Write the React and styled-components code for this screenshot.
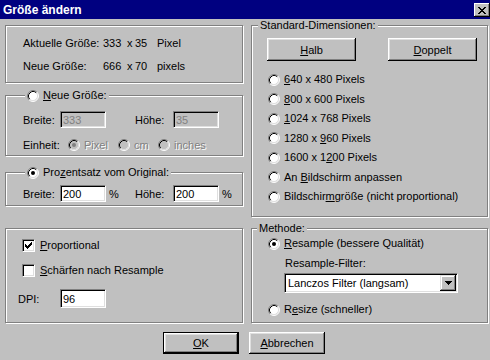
import styled, { createGlobalStyle } from "styled-components";

const GlobalStyle = createGlobalStyle`
  html, body {
    margin: 0;
    padding: 0;
    background: #c0c0c0;
  }
  body {
    font-family: "Liberation Sans", Arial, sans-serif;
    font-size: 11px;
    color: #000;
  }
`;

const RadioIcon = ({ checked, disabled }) => (
  <RadioSvg width="12" height="12" viewBox="0 0 12 12">
    <circle cx="6" cy="6" r="5" fill={disabled ? "#c0c0c0" : "#fff"} />
    <path d="M2.11 9.89A5.5 5.5 0 0 1 9.89 2.11" stroke="#808080" fill="none" />
    <path d="M9.89 2.11A5.5 5.5 0 0 1 2.11 9.89" stroke="#fff" fill="none" />
    <path d="M2.82 9.18A4.5 4.5 0 0 1 9.18 2.82" stroke="#000" fill="none" />
    <path d="M9.18 2.82A4.5 4.5 0 0 1 2.82 9.18" stroke="#dfdfdf" fill="none" />
    {checked && <circle cx="6" cy="6" r="2" fill={disabled ? "#808080" : "#000"} />}
  </RadioSvg>
);

const Radio = ({ checked, disabled, h, children }) => (
  <Option $h={h} $disabled={disabled}>
    <RadioIcon checked={checked} disabled={disabled} />
    <span>{children}</span>
  </Option>
);

const Check = ({ checked, children }) => (
  <CheckRow>
    <CheckBox>
      {checked && (
        <svg width="7" height="7" viewBox="0 0 7 7">
          <path
            d="M0 2h1v3H0z M1 3h1v3H1z M2 4h1v3H2z M3 3h1v3H3z M4 2h1v3H4z M5 1h1v3H5z M6 0h1v3H6z"
            fill="#000"
          />
        </svg>
      )}
    </CheckBox>
    <span>{children}</span>
  </CheckRow>
);

const App = () => (
  <Window>
    <GlobalStyle />
    <TitleBar>
      <span>Größe ändern</span>
      <CloseBox>
        <svg width="8" height="7" viewBox="0 0 8 7">
          <path
            d="M0 0h2v1H0z M6 0h2v1H6z M1 1h2v1H1z M5 1h2v1H5z M2 2h4v1H2z M3 3h2v1H3z M2 4h4v1H2z M1 5h2v1H1z M5 5h2v1H5z M0 6h2v1H0z M6 6h2v1H6z"
            fill="#000"
          />
        </svg>
      </CloseBox>
    </TitleBar>

    <Body>
      <Column $w={238}>
        <Group $h={58} $pad="11px 0 0 17px">
          <InfoGrid>
            <span>Aktuelle Größe:</span>
            <span>333</span>
            <span>x</span>
            <span>35</span>
            <span>Pixel</span>
            <span>Neue Größe:</span>
            <span>666</span>
            <span>x</span>
            <span>70</span>
            <span>pixels</span>
          </InfoGrid>
        </Group>

        <Group $h={61} $mt={12} $pad="15px 0 0 17px">
          <Legend $left={19}>
            <Radio>
              <u>N</u>eue Größe:
            </Radio>
          </Legend>
          <SizeRow>
            <span>Breite:</span>
            <Field disabled defaultValue="333" />
            <span />
            <span>Höhe:</span>
            <Field disabled defaultValue="35" />
          </SizeRow>
          <UnitRow>
            <span>Einheit:</span>
            <Radio checked disabled>Pixel</Radio>
            <Radio disabled>cm</Radio>
            <Radio disabled>inches</Radio>
          </UnitRow>
        </Group>

        <Group $h={34} $mt={16} $pad="12px 0 0 17px">
          <Legend $left={19}>
            <Radio checked>
              Pro<u>z</u>entsatz vom Original:
            </Radio>
          </Legend>
          <SizeRow>
            <span>Breite:</span>
            <Field defaultValue="200" />
            <Pct>%</Pct>
            <span>Höhe:</span>
            <Field defaultValue="200" />
            <Pct>%</Pct>
          </SizeRow>
        </Group>

        <Group $h={95} $mt={22} $pad="10px 0 0 12px">
          <Check checked>
            <u>P</u>roportional
          </Check>
          <Check>
            <u>S</u>chärfen nach Resample
          </Check>
          <DpiRow>
            <span>DPI:</span>
            <Field $h={19} defaultValue="96" />
          </DpiRow>
        </Group>
      </Column>

      <Column $w={237}>
        <Group $h={192} $pad="12px 0 0 0">
          <Legend $left={6}>Standard-Dimensionen:</Legend>
          <ButtonRow>
            <Button $w={89} $h={23}>
              <u>H</u>alb
            </Button>
            <Button $w={89} $h={23}>
              <u>D</u>oppelt
            </Button>
          </ButtonRow>
          <RadioList>
            <Radio h={19.5}>
              <u>6</u>40 x 480 Pixels
            </Radio>
            <Radio h={19.5}>
              <u>8</u>00 x 600 Pixels
            </Radio>
            <Radio h={19.5}>
              <u>1</u>024 x 768 Pixels
            </Radio>
            <Radio h={19.5}>
              1280 x <u>9</u>60 Pixels
            </Radio>
            <Radio h={19.5}>
              1600 x 1<u>2</u>00 Pixels
            </Radio>
            <Radio h={19.5}>
              An <u>B</u>ildschirm anpassen
            </Radio>
            <Radio h={19.5}>
              Bildschir<u>m</u>größe (nicht proportional)
            </Radio>
          </RadioList>
        </Group>

        <Group $h={95} $mt={11} $pad="8px 0 0 16px">
          <Legend $left={5}>Methode:</Legend>
          <Radio checked>
            <u>R</u>esample (bessere Qualität)
          </Radio>
          <FilterLabel>Resample-Filter:</FilterLabel>
          <Select>
            <span>Lanczos Filter (langsam)</span>
            <DropButton>
              <svg width="7" height="4" viewBox="0 0 7 4">
                <path d="M0 0h7v1H0z M1 1h5v1H1z M2 2h3v1H2z M3 3h1v1H3z" fill="#000" />
              </svg>
            </DropButton>
          </Select>
          <SpacedOption>
            <Radio>
              R<u>e</u>size (schneller)
            </Radio>
          </SpacedOption>
        </Group>
      </Column>
    </Body>

    <Footer>
      <Button $w={76} $h={22} $default>
        <u>O</u>K
      </Button>
      <Button $w={76} $h={22}>
        <u>A</u>bbrechen
      </Button>
    </Footer>
  </Window>
);

const Window = styled.div`
  width: 490px;
  height: 360px;
  background: #c0c0c0;
  display: flex;
  flex-direction: column;
  overflow: hidden;
`;
const TitleBar = styled.div`
  height: 19px;
  flex-shrink: 0;
  background: #000080;
  color: #fff;
  font-weight: bold;
  font-size: 12px;
  display: flex;
  align-items: center;
  justify-content: space-between;
  padding-left: 3px;
`;
const CloseBox = styled.div`
  width: 16px;
  height: 14px;
  margin-top: 1px;
  background: #c0c0c0;
  box-shadow: inset -1px -1px #000, inset 1px 1px #fff, inset -2px -2px #808080;
  display: flex;
  align-items: center;
  justify-content: center;
`;
const Body = styled.div`
  display: flex;
  gap: 8px;
  padding: 6px 0 0 5px;
`;
const Column = styled.div`
  width: ${(p) => p.$w}px;
  display: flex;
  flex-direction: column;
`;
const Group = styled.div`
  position: relative;
  box-sizing: border-box;
  height: ${(p) => p.$h}px;
  margin-top: ${(p) => p.$mt || 0}px;
  padding: ${(p) => p.$pad};
  border: 1px solid #808080;
  box-shadow: inset 1px 1px #fff, 1px 1px #fff;
`;
const Legend = styled.div`
  position: absolute;
  top: -7px;
  left: ${(p) => p.$left}px;
  padding: 0 2px;
  background: #c0c0c0;
  line-height: 13px;
  display: flex;
  align-items: center;
`;
const RadioSvg = styled.svg`
  display: block;
  flex-shrink: 0;
`;
const Option = styled.div`
  display: flex;
  align-items: center;
  gap: 4px;
  height: ${(p) => p.$h || 13}px;
  line-height: 13px;
  white-space: nowrap;
  color: ${(p) => (p.$disabled ? "#808080" : "#000")};
  text-shadow: ${(p) => (p.$disabled ? "1px 1px #fff" : "none")};
`;
const InfoGrid = styled.div`
  display: grid;
  grid-template-columns: 80px 24px 8px 22px auto;
  row-gap: 10px;
  line-height: 13px;
`;
const SizeRow = styled.div`
  display: grid;
  grid-template-columns: 37px 46px 29px 38px 46px auto;
  align-items: center;
  height: 17px;
`;
const Pct = styled.span`
  padding-left: 3px;
`;
const UnitRow = styled.div`
  display: grid;
  grid-template-columns: 45px 50px 40px auto;
  align-items: center;
  height: 16px;
  margin-top: 9px;
`;
const Field = styled.input`
  box-sizing: border-box;
  width: 46px;
  height: ${(p) => p.$h || 17}px;
  margin: 0;
  padding: 0 0 0 2px;
  font: inherit;
  outline: none;
  color: #000;
  background: #fff;
  border-style: solid;
  border-width: 1px;
  border-color: #808080 #fff #fff #808080;
  box-shadow: inset 1px 1px #000, inset -1px -1px #dfdfdf;
  &:disabled {
    background: #c0c0c0;
    color: #808080;
  }
`;
const CheckRow = styled.div`
  display: flex;
  align-items: center;
  gap: 5px;
  height: 13px;
  margin: 0 0 12px 4px;
  line-height: 13px;
`;
const CheckBox = styled.div`
  box-sizing: border-box;
  width: 13px;
  height: 13px;
  background: #fff;
  border-style: solid;
  border-width: 1px;
  border-color: #808080 #fff #fff #808080;
  box-shadow: inset 1px 1px #000, inset -1px -1px #dfdfdf;
  display: flex;
  align-items: center;
  justify-content: center;
`;
const DpiRow = styled.div`
  display: grid;
  grid-template-columns: 42px 46px;
  align-items: center;
  margin-top: 1px;
`;
const ButtonRow = styled.div`
  display: flex;
  gap: 32px;
  padding-left: 15px;
`;
const Button = styled.button`
  box-sizing: border-box;
  width: ${(p) => p.$w}px;
  height: ${(p) => p.$h}px;
  margin: 0;
  padding: 0;
  font: inherit;
  color: #000;
  background: #c0c0c0;
  border: ${(p) => (p.$default ? "1px solid #000" : "none")};
  box-shadow: inset -1px -1px #000, inset 1px 1px #fff, inset -2px -2px #808080,
    inset 2px 2px #dfdfdf;
`;
const RadioList = styled.div`
  display: flex;
  flex-direction: column;
  margin-top: 9px;
  padding-left: 16px;
`;
const FilterLabel = styled.div`
  margin: 7px 0 0 17px;
  line-height: 13px;
`;
const Select = styled.div`
  box-sizing: border-box;
  width: 174px;
  height: 20px;
  margin: 3px 0 0 16px;
  padding-left: 3px;
  background: #fff;
  border-style: solid;
  border-width: 1px;
  border-color: #808080 #fff #fff #808080;
  box-shadow: inset 1px 1px #000, inset -1px -1px #dfdfdf;
  display: flex;
  align-items: center;
  justify-content: space-between;
`;
const DropButton = styled.div`
  width: 16px;
  height: 16px;
  margin-right: 1px;
  background: #c0c0c0;
  box-shadow: inset -1px -1px #000, inset 1px 1px #dfdfdf, inset -2px -2px #808080,
    inset 2px 2px #fff;
  display: flex;
  align-items: center;
  justify-content: center;
`;
const SpacedOption = styled.div`
  margin-top: 10px;
`;
const Footer = styled.div`
  display: flex;
  justify-content: center;
  gap: 10px;
  margin-top: 9px;
  padding-right: 2px;
`;

export default App;
